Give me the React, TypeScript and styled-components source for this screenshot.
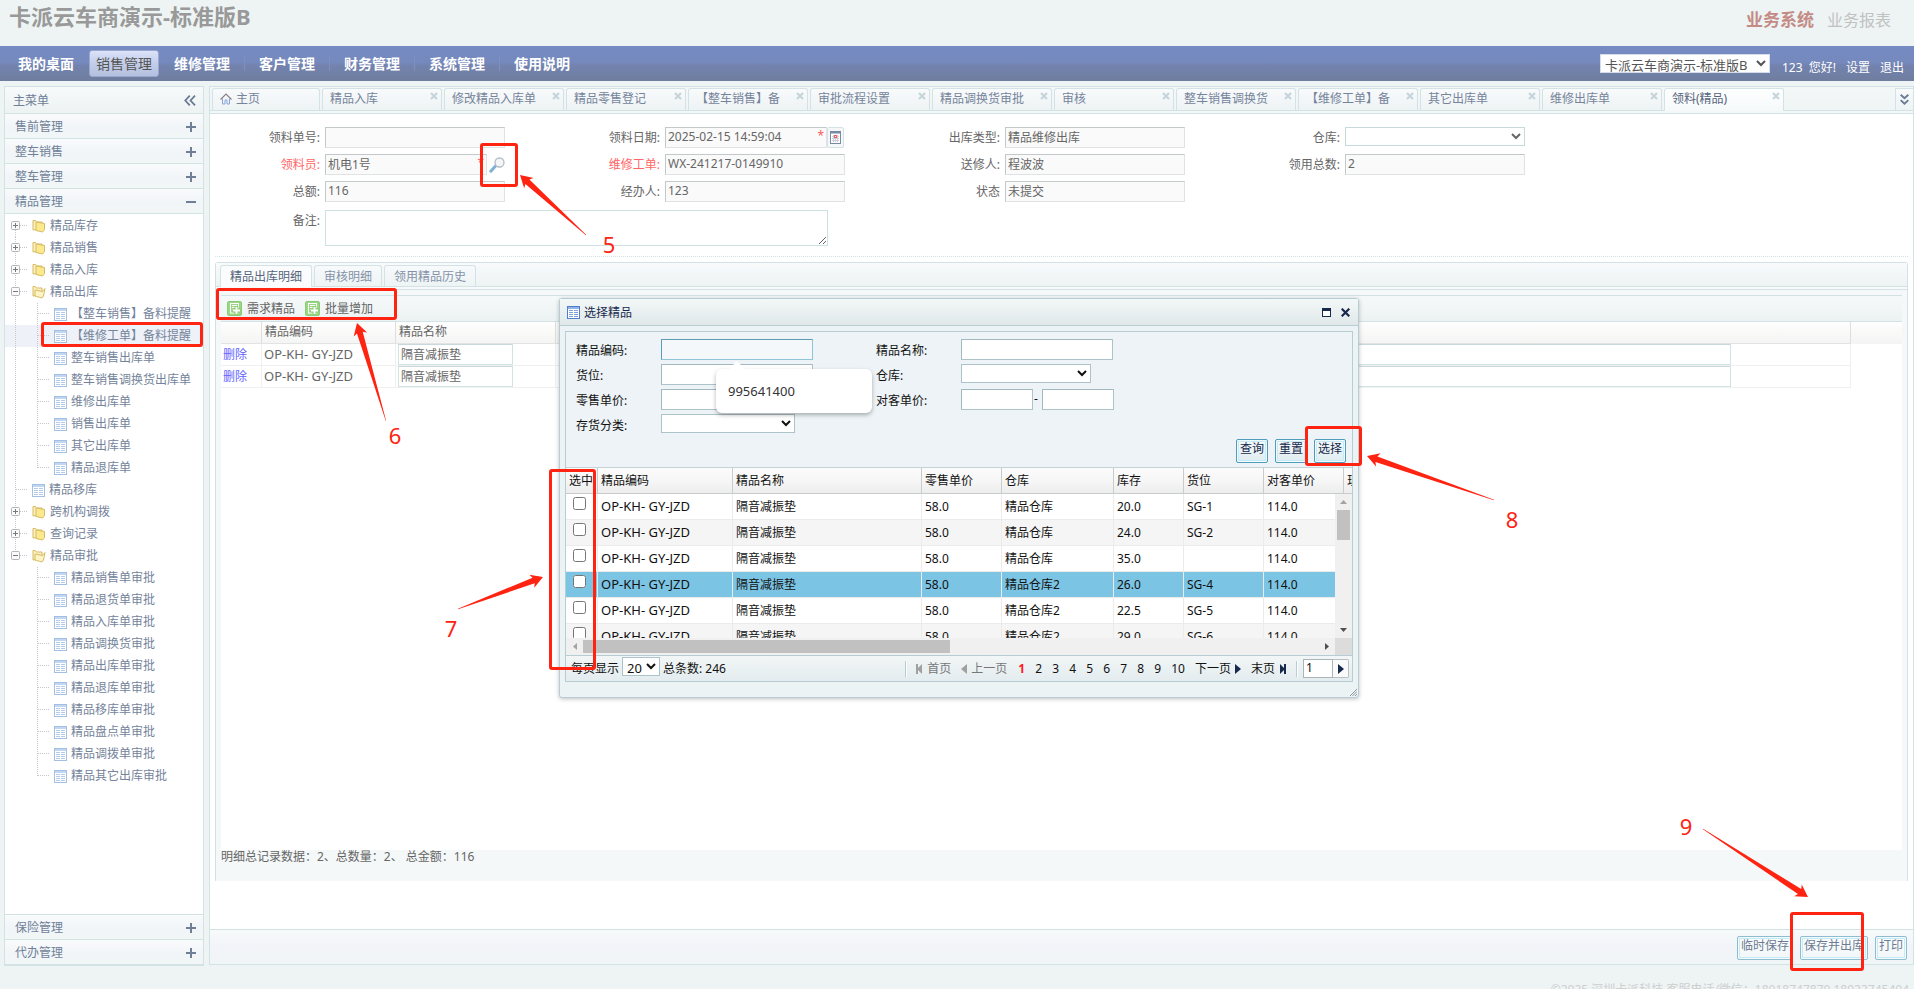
import React from "react";
import styled, { createGlobalStyle, css } from "styled-components";

const Global = createGlobalStyle`
  * { box-sizing: border-box; }
  html, body { margin: 0; padding: 0; }
  body {
    font: 12px/16px "Noto Sans", "Noto Sans CJK SC", sans-serif;
    color: #666;
    background: #eef4f4;
  }
  button, input, select, textarea { font: inherit; color: inherit; margin: 0; }
  button { cursor: pointer; }
  a { color: inherit; text-decoration: none; }
  ul { list-style: none; margin: 0; padding: 0; }
  table { border-collapse: separate; border-spacing: 0; }
`;

const line = "#d3e3e5";
const mark = "#ff2312";

/* ---------- page frame ---------- */

const Page = styled.div`
  position: relative;
  height: 100vh;
  display: flex;
  flex-direction: column;
  overflow: hidden;
`;

const Header = styled.header`
  height: 46px;
  flex: none;
  display: flex;
  justify-content: space-between;
  padding: 0 23px 0 9px;
`;

const SiteTitle = styled.h1`
  margin: 0;
  font-size: 22px;
  line-height: 32px;
  font-weight: 700;
  color: #999;
`;

const SystemLinks = styled.nav`
  display: flex;
  gap: 13px;
  font-size: 16px;
  line-height: 40px;
`;

const SystemLink = styled.a<{ $active?: boolean }>`
  font-size: ${(p) => (p.$active ? 17 : 16)}px;
  font-weight: ${(p) => (p.$active ? 700 : 400)};
  color: ${(p) => (p.$active ? "#c48b86" : "#c0c2c2")};
`;

const NavBar = styled.nav`
  height: 35px;
  flex: none;
  display: flex;
  justify-content: space-between;
  padding: 4px 10px 4px 4px;
  background: linear-gradient(#758bc2 0%, #7589bd 48%, #7383af 55%, #6f7d9e 100%);
`;

const NavItems = styled.div`
  display: flex;
  align-items: center;
`;

const NavItem = styled.a<{ $active?: boolean; $line?: boolean }>`
  height: 27px;
  font-size: 14px;
  line-height: 27px;
  color: #fff;
  font-weight: 700;
  padding: 0 14px;
  position: relative;
  border-right: 1px solid transparent;
  ${(p) =>
    p.$line &&
    css`
      border-image: linear-gradient(transparent 25%, #7f90bd 25%, #7f90bd 75%, transparent 75%) 1;
      border-width: 0 1px 0 0;
    `}
  ${(p) =>
    p.$active &&
    css`
      padding: 0 6px;
      margin-right: 1px;
      line-height: 25px;
      font-weight: 400;
      color: #555;
      border: 1px solid #9aa8cf;
      border-radius: 3px;
      background: linear-gradient(#dbe3fa, #c3cde8 50%, #b4c0df);
    `}
`;

const UserArea = styled.div`
  display: flex;
  color: #fff;
  line-height: 35px;
`;

const CompanySelect = styled.select`
  width: 170px;
  height: 19px;
  margin: 4px 12px 0 0;
  padding: 0;
  font-size: 13px;
  color: #555;
  background: #fff;
  border: 1px solid #d5dcea;
  border-radius: 0;
`;

const UserText = styled.span`
  margin-right: 10px;
  white-space: pre;
`;

const UserLink = styled.a`
  & + & {
    margin-left: 10px;
  }
`;

const Body = styled.div`
  flex: 1;
  min-height: 0;
  display: flex;
  gap: 5px;
  padding: 5px 0 0 4px;
`;

const Footer = styled.footer`
  height: 23px;
  flex: none;
  overflow: hidden;
  padding: 16px 5px 0 0;
  text-align: right;
  color: #cdcfcf;
`;

/* ---------- sidebar ---------- */

const Sidebar = styled.aside`
  width: 200px;
  flex: none;
  display: flex;
  flex-direction: column;
  border: 1px solid ${line};
  border-bottom-width: 2px;
  background: #fff;
  color: #6f7f97;
`;

const SideTitle = styled.div`
  height: 26px;
  flex: none;
  display: flex;
  align-items: center;
  justify-content: space-between;
  padding: 1px 7px 0 8px;
  background: linear-gradient(#f7fafb, #edf2f2);
`;

const SideSection = styled.button`
  height: 25px;
  flex: none;
  width: 100%;
  display: flex;
  align-items: center;
  justify-content: space-between;
  padding: 1px 7px 0 10px;
  border: 0;
  border-top: 1px solid ${line};
  background: linear-gradient(#f9fafc, #f1f5f8 60%, #f1f6f6);
`;

const Tree = styled.ul`
  flex: 1;
  padding-top: 1px;
  border-top: 1px solid ${line};
  overflow: hidden;
`;

const TreeRow = styled.li<{ $selected?: boolean }>`
  height: 22px;
  display: flex;
  align-items: center;
  background: ${(p) => (p.$selected ? "#eef2f8" : "transparent")};
  color: #75849b;
`;

const TreeLabel = styled.a`
  margin-left: 4px;
  white-space: nowrap;
`;

/* ---------- main panel ---------- */

const Main = styled.main`
  flex: 1;
  min-width: 0;
  display: flex;
  flex-direction: column;
  margin-bottom: 1px;
  border: 1px solid ${line};
  background: #fff;
`;

const TabStrip = styled.div`
  height: 27px;
  flex: none;
  display: flex;
  padding: 1px 0 0 2px;
  gap: 2px;
  border-bottom: 1px solid ${line};
  background: linear-gradient(#f3f7f8 0, #eff4f5 23px, ${line} 23px, ${line} 24px, #f4f7f8 24px);
`;

const Tab = styled.a<{ $active?: boolean; $home?: boolean }>`
  flex: 0 1 ${(p) => (p.$home ? 108 : 120)}px;
  min-width: 0;
  height: ${(p) => (p.$active ? 23 : 22)}px;
  display: flex;
  align-items: flex-start;
  justify-content: space-between;
  padding: 0 3px 0 7px;
  line-height: 20px;
  border: 1px solid ${line};
  border-bottom: 0;
  border-radius: 3px 3px 0 0;
  white-space: nowrap;
  color: ${(p) => (p.$active ? "#56647c" : "#75849b")};
  background: ${(p) => (p.$active ? "linear-gradient(#fdfefe, #f6f9fb)" : "linear-gradient(#f8fafc, #eef3f4)")};
`;

const HomeLabel = styled.span`
  display: flex;
  align-items: center;
  gap: 4px;
`;

const TabClose = styled.button`
  width: 8px;
  height: 8px;
  margin-top: 3px;
  padding: 0;
  border: 0;
  background: none;
  display: flex;
`;

const TabMore = styled.button`
  width: 18px;
  height: 22px;
  margin-left: auto;
  display: flex;
  align-items: center;
  justify-content: center;
  padding: 0;
  border: 1px solid ${line};
  border-width: 1px 0 0 1px;
  background: linear-gradient(#f8fafc, #eef3f4);
`;

const Form = styled.form`
  display: grid;
  grid-template-columns: repeat(4, 340px);
  grid-auto-rows: 27px;
  flex: none;
  height: 143px;
  padding-top: 13px;
  margin: 0 5px;
  border-bottom: 1px dotted ${line};
`;

const Field = styled.div<{ $wide?: boolean }>`
  display: flex;
  align-items: flex-start;
  grid-column: ${(p) => (p.$wide ? "span 2" : "auto")};
  margin-left: -5px;
`;

const FieldLabel = styled.label<{ $required?: boolean }>`
  width: 110px;
  margin-right: 5px;
  flex: none;
  text-align: right;
  line-height: 21px;
  color: ${(p) => (p.$required ? "#ff6666" : "#666")};
`;

const Control = styled.span<{ $w: number }>`
  position: relative;
  width: ${(p) => p.$w}px;
  height: 21px;
`;

const ReadInput = styled.input`
  display: block;
  width: 100%;
  height: 21px;
  padding: 0 2px 2px;
  border: 1px solid #c3c9cb;
  border-right-color: #dfe3e4;
  border-bottom-color: #dfe3e4;
  background: #fafafa;
`;

const Star = styled.span`
  position: absolute;
  right: 3px;
  top: 2px;
  line-height: 14px;
  color: #ff5a5a;
`;

const IconButton = styled.button<{ $framed?: boolean }>`
  width: ${(p) => (p.$framed ? 17 : 20)}px;
  height: 21px;
  display: flex;
  align-items: center;
  justify-content: center;
  padding: 0;
  background: ${(p) => (p.$framed ? "#f5f8f9" : "none")};
  border: ${(p) => (p.$framed ? `1px solid ${line}` : "0")};
  border-radius: 2px;
`;

const FormSelect = styled.select`
  width: 180px;
  height: 19px;
  padding: 0;
  border: 1px solid #c9d8dc;
  border-radius: 0;
  background: #fff;
`;

const Remark = styled.textarea`
  width: 503px;
  height: 36px;
  margin-top: 2px;
  padding: 2px;
  border: 1px solid #cfe0e3;
  background: #fff;
`;

const RemarkLabel = styled(FieldLabel)`
  margin-top: 2px;
`;

const Detail = styled.section`
  margin: 5px 5px 0;
  flex: 1;
  min-height: 0;
  display: flex;
  flex-direction: column;
  border: 1px solid ${line};
  border-bottom: 0;
  border-radius: 3px 3px 0 0;
  background: #f4f8f8;
`;

const DetailTabs = styled.div`
  height: 27px;
  flex: none;
  display: flex;
  gap: 2px;
  padding: 2px 4px 0;
  border-bottom: 1px solid ${line};
  background: linear-gradient(#f8fafc 0, #eef3f4 23px, ${line} 23px, ${line} 24px, #f8fafa 24px);
`;

const DetailTab = styled.a<{ $active?: boolean }>`
  height: ${(p) => (p.$active ? 22 : 21)}px;
  padding: 0 9px;
  line-height: 21px;
  border: 1px solid ${line};
  border-bottom: 0;
  border-radius: 3px 3px 0 0;
  color: ${(p) => (p.$active ? "#56647c" : "#8492a8")};
  background: ${(p) => (p.$active ? "#fafcfd" : "linear-gradient(#f8fafc, #eef3f4)")};
`;

const DetailBody = styled.div`
  flex: 1;
  min-height: 0;
  margin: 5px 5px 0;
  display: flex;
  flex-direction: column;
`;

const Toolbar = styled.div`
  height: 27px;
  flex: none;
  display: flex;
  align-items: center;
  gap: 10px;
  padding-left: 6px;
  border-top: 1px solid ${line};
  border-bottom: 1px solid ${line};
  background: linear-gradient(#f6f9f9, #ecf2f3);
`;

const ToolButton = styled.button`
  display: flex;
  align-items: center;
  gap: 5px;
  padding: 0;
  border: 0;
  background: none;
`;

const DetailGrid = styled.div`
  flex: 1;
  background: #fff;
  overflow: hidden;
`;

const DetailHead = styled.div`
  background: linear-gradient(#fefefe, #f9f9f8 50%, #f4f4f4);
`;

const DetailTable = styled.table`
  table-layout: fixed;
  width: 1630px;

  th {
    height: 22px;
    padding: 0 3px 2px;
    text-align: left;
    font-weight: 400;
    border-right: 1px solid #dcdfe0;
    border-bottom: 1px solid #e2e4e4;
  }
  td {
    height: 22px;
    padding: 0 2px;
    background: #fff;
    border-right: 1px solid #f0f0f0;
    border-bottom: 1px solid #f0f0f0;
  }
`;

const DeleteLink = styled.a`
  color: #6363ff;
`;

const Code = styled.span`
  font-size: 13px;
  line-height: 16px;
`;

const CellInput = styled.input<{ $w: number }>`
  display: block;
  width: ${(p) => p.$w}px;
  height: 21px;
  padding: 0 2px 2px;
  border: 1px solid ${line};
  border-top-color: #c9d8dc;
  background: #fff;
`;

const Summary = styled.div`
  height: 31px;
  flex: none;
  line-height: 14px;
  white-space: pre;
`;

const ActionBar = styled.div`
  height: 35px;
  flex: none;
  margin-top: 48px;
  display: flex;
  justify-content: flex-end;
  gap: 7px;
  padding: 6px 6px 0;
  border-top: 1px solid ${line};
  background: linear-gradient(#f7fafb, #f2f4f8 50%, #f0f5f7);
`;

const PushButton = styled.button<{ $faded?: boolean }>`
  height: 24px;
  padding: 0 3px 5px;
  flex: none;
  line-height: 18px;
  border: 1px solid ${(p) => (p.$faded ? "#8fbdd0" : "#4f9cbc")};
  border-radius: 2px;
  box-shadow: inset 0 0 0 1px #f4fbfd, inset 0 0 0 2px #c4ecf8;
  background: ${(p) => (p.$faded ? "linear-gradient(#fbfdfd, #f2f6f8)" : "linear-gradient(#f6fbfc, #dfecf0)")};
  color: ${(p) => (p.$faded ? "#6d7c94" : "#17294d")};
`;

/* ---------- dialog ---------- */

const Dialog = styled.section`
  position: absolute;
  left: 559px;
  top: 298px;
  width: 800px;
  height: 400px;
  display: flex;
  flex-direction: column;
  border: 1px solid #b7cdd3;
  border-radius: 3px;
  background: #ecf3f5;
  box-shadow: 0 1px 4px rgba(0, 0, 0, 0.25);
  color: #111;
`;

const DialogTitle = styled.div`
  height: 27px;
  flex: none;
  display: flex;
  align-items: center;
  gap: 4px;
  padding: 1px 8px 0 7px;
  border-bottom: 1px solid #b7cdd3;
  background: linear-gradient(#f3f7f7 0%, #eaf0f1 50%, #e0e8ea 100%);
  color: #17294d;
`;

const DialogTools = styled.span`
  margin-left: auto;
  display: flex;
  gap: 10px;
`;

const BareButton = styled.button`
  display: flex;
  align-items: center;
  padding: 0;
  border: 0;
  background: none;
`;

const DialogBody = styled.div`
  height: 351px;
  margin: 5px 5px 0;
  display: flex;
  flex-direction: column;
  border: 1px solid #b7cdd3;
  background: #edf3f6;
`;

const SearchForm = styled.form`
  height: 135px;
  flex: none;
  display: grid;
  grid-template-columns: 300px 1fr;
  grid-auto-rows: 25px;
  padding: 7px 6px 0 10px;
`;

const SearchField = styled.div`
  display: flex;
`;

const SearchLabel = styled.label`
  width: 85px;
  line-height: 23px;
`;

const SearchInput = styled.input<{ $w: number; $focused?: boolean }>`
  width: ${(p) => p.$w}px;
  height: 21px;
  border: 1px solid ${(p) => (p.$focused ? "#8ec6d8" : "#adc3ca")};
  border-top-color: ${(p) => (p.$focused ? "#5c9db3" : "#a3b9c0")};
  border-left-color: ${(p) => (p.$focused ? "#5c9db3" : "#a3b9c0")};
  background: ${(p) => (p.$focused ? "#f5f8fb" : "#fff")};
  outline: none;
`;

const SearchSelect = styled.select<{ $w: number }>`
  width: ${(p) => p.$w}px;
  height: 19px;
  padding: 0;
  border: 1px solid #adc3ca;
  border-radius: 0;
  background: #fff;
`;

const Dash = styled.span`
  width: 9px;
  padding-left: 1px;
  line-height: 20px;
`;

const SearchActions = styled.div`
  grid-column: span 2;
  display: flex;
  justify-content: flex-end;
  gap: 7px;
`;

const HeadClip = styled.div`
  flex: none;
  overflow: hidden;
  border-top: 1px solid #c6d4d8;
  background: linear-gradient(#fbfbfb, #f6f6f6 50%, #ececec);
`;

const BodyArea = styled.div`
  height: 161px;
  flex: none;
  display: grid;
  grid-template-columns: 1fr 17px;
  grid-template-rows: 1fr 17px;
  background: #dcdcdc;
`;

const BodyClip = styled.div`
  min-width: 0;
  min-height: 0;
  overflow: hidden;
  background: #fff;
`;

const PickTable = styled.table`
  table-layout: fixed;
  width: 877px;

  th,
  td {
    padding: 0 3px;
    height: 26px;
    text-align: left;
    font-weight: 400;
    white-space: nowrap;
  }
  th {
    border-right: 1px solid #c8cccd;
    border-bottom: 1px solid #c8cccd;
    line-height: 24px;
  }
  td {
    border-right: 1px solid #ebebeb;
    border-bottom: 1px solid #ebebeb;
  }
  th:first-child {
    padding-right: 0;
  }
  td:first-child {
    padding: 0 0 0 7px;
  }
`;

const PickRow = styled.tr<{ $alt?: boolean; $selected?: boolean }>`
  background: ${(p) => (p.$selected ? "#7cc4e4" : p.$alt ? "#f5f5f5" : "#fff")};
`;

const PickBox = styled.input`
  display: block;
  width: 13px;
  height: 13px;
  margin-bottom: 6px;
`;

const VScroll = styled.div`
  display: flex;
  flex-direction: column;
  align-items: center;
  padding: 6px 0;
  background: #f0f0f0;
`;

const VThumb = styled.div`
  width: 13px;
  height: 30px;
  margin: 6px 0 auto;
  background: #c1c1c1;
`;

const HScroll = styled.div`
  display: flex;
  align-items: center;
  padding: 0 6px 0 7px;
  background: #f0f0f0;
`;

const HThumb = styled.div`
  width: 367px;
  height: 13px;
  margin: 0 auto 0 6px;
  background: #c1c1c1;
`;

const Pager = styled.div`
  flex: 1;
  display: flex;
  align-items: center;
  padding: 0 3px 0 5px;
  border-top: 1px solid #b7cdd3;
  background: linear-gradient(#f2f6f7, #e3ecef);
`;

const SizeSelect = styled.select`
  width: 38px;
  height: 19px;
  margin: 0 3px 4px;
  padding: 0;
  font-size: 13px;
  border: 1px solid #adc3ca;
  border-radius: 0;
  background: #fff;
`;

const PagerLinks = styled.div`
  margin-left: auto;
  display: flex;
  align-items: center;
`;

const Divider = styled.i`
  width: 1px;
  height: 16px;
  background: #b7cdd3;
  box-shadow: 1px 0 0 #fff;
`;

const PagerStep = styled.button<{ $off?: boolean }>`
  display: flex;
  align-items: center;
  gap: 4px;
  padding: 0;
  border: 0;
  background: none;
  color: ${(p) => (p.$off ? "#777" : "#111")};
  margin-left: 10px;
`;

const PageNumbers = styled.div`
  display: flex;
  gap: 10px;
  margin-left: 11px;
`;

const PageNumber = styled.a<{ $current?: boolean }>`
  min-width: 7px;
  color: ${(p) => (p.$current ? "#ff1a1a" : "#111")};
  font-weight: ${(p) => (p.$current ? 700 : 400)};
`;

const GoBox = styled.span`
  display: flex;
  margin-left: 6px;
`;

const GoInput = styled.input`
  width: 30px;
  height: 19px;
  padding: 0 2px 2px;
  border: 1px solid #a9b5b9;
  background: #fff;
`;

const GoButton = styled.button`
  width: 16px;
  height: 19px;
  padding: 0;
  display: flex;
  align-items: center;
  justify-content: center;
  border: 1px solid #b9bfc2;
  border-left: 0;
  border-radius: 0 2px 2px 0;
  background: #fafafa;
`;

const ResizeGrip = styled.svg`
  position: absolute;
  right: 1px;
  bottom: 1px;
`;

const Suggestion = styled.div`
  position: absolute;
  left: 716px;
  top: 369px;
  width: 156px;
  height: 44px;
  padding-left: 12px;
  border-radius: 6px;
  background: #fff;
  box-shadow: 0 2px 4px rgba(0, 0, 0, 0.3);
  font-size: 13px;
  line-height: 44px;
  color: #333;

  &::before {
    content: "";
    position: absolute;
    left: 13px;
    top: -8px;
    border: 8px solid transparent;
    border-top: 0;
    border-bottom-color: #fff;
  }
`;

/* ---------- step marks ---------- */

const MarkBox = styled.div<{ $x: number; $y: number; $w: number; $h: number }>`
  position: absolute;
  left: ${(p) => p.$x}px;
  top: ${(p) => p.$y}px;
  width: ${(p) => p.$w}px;
  height: ${(p) => p.$h}px;
  border: 3px solid ${mark};
  border-radius: 3px;
  pointer-events: none;
`;

const MarkNumber = styled.span<{ $x: number; $y: number }>`
  position: absolute;
  left: ${(p) => p.$x}px;
  top: ${(p) => p.$y}px;
  transform: translate(-50%, -50%);
  font-size: 22px;
  line-height: 24px;
  color: ${mark};
`;

const ArrowLayer = styled.svg`
  position: absolute;
  left: 0;
  top: 0;
  width: 100%;
  height: 100%;
  pointer-events: none;
`;

type ArrowProps = { from: [number, number]; to: [number, number] };

function Arrow({ from, to }: ArrowProps) {
  const dx = to[0] - from[0];
  const dy = to[1] - from[1];
  const len = Math.hypot(dx, dy);
  const ux = dx / len;
  const uy = dy / len;
  const at = (back: number, side: number) =>
    `${(to[0] - ux * back - uy * side).toFixed(2)},${(to[1] - uy * back + ux * side).toFixed(2)}`;
  const points = [
    at(0, 0),
    at(12, 7),
    at(10, 3),
    at(len, 0.2),
    at(len, -0.2),
    at(10, -3),
    at(12, -7),
  ].join(" ");
  return <polygon points={points} fill={mark} />;
}

/* ---------- icons ---------- */

const PlusIcon = () => (
  <svg width="10" height="10" viewBox="0 0 10 10">
    <path d="M5 0v10M0 5h10" stroke="#6f7f97" strokeWidth="2" />
  </svg>
);

const MinusIcon = () => (
  <svg width="10" height="10" viewBox="0 0 10 10">
    <path d="M0 5h10" stroke="#6f7f97" strokeWidth="2" />
  </svg>
);

const CollapseIcon = () => (
  <svg width="12" height="11" viewBox="0 0 12 11" fill="none" stroke="#6a7b95" strokeWidth="1.8">
    <path d="M5.8 0.6L1.3 5.5l4.5 4.9M11 0.6L6.5 5.5l4.5 4.9" />
  </svg>
);

const ExpandIcon = () => (
  <svg width="9" height="11" viewBox="0 0 9 11" fill="none" stroke="#6a7b95" strokeWidth="1.9">
    <path d="M0.7 0.8L4.5 4.3l3.8-3.5M0.7 6.1L4.5 9.6l3.8-3.5" />
  </svg>
);

const CloseIcon = () => (
  <svg width="8" height="8" viewBox="0 0 8 8">
    <path d="M1 1l6 6M7 1L1 7" stroke="#c5d5db" strokeWidth="2.2" />
  </svg>
);

const HomeIcon = () => (
  <svg width="12" height="12" viewBox="0 0 12 12" fill="none">
    <path d="M2.500 5.500v5.500h2.500v-4h2v4h2.500v-5.500" stroke="#8aa5d6" fill="#eef4fd" />
    <path d="M0.500 6.500L6 1l5.500 5.500" stroke="#8e8186" strokeWidth="1.2" />
  </svg>
);

const FolderIcon = ({ open }: { open?: boolean }) => (
  <svg width="14" height="14" viewBox="0 0 14 14" strokeLinejoin="round">
    <path d="M1 1.500h2.500l1 1.500H10v7L1 11z" fill="#fbf0bf" stroke="#d6bb62" />
    {open ? (
      <path d="M3 5l7.500 1.500L13 3.500l-1.500 7.500-1.500 2L3 11z" fill="#fdf4c4" stroke="#d6bb62" />
    ) : (
      <path d="M4 3l8.500 1.500v6l-2 2.500L4 11.500z" fill="#fce98e" stroke="#d6bb62" />
    )}
  </svg>
);

const SheetIcon = ({ dark }: { dark?: boolean }) => (
  <svg width="13" height="13" viewBox="0 0 13 13">
    <rect x="0.5" y="0.5" width="12" height="12" fill="#fff" stroke={dark ? "#4f7fc8" : "#a3bfe2"} />
    <rect x="1" y="1" width="11" height="2" fill={dark ? "#8fb4ea" : "#c0d6f1"} />
    <path
      d="M2 4.500h4M7 4.500h4M2 6.500h4M7 6.500h4M2 8.500h4M7 8.500h4M2 10.500h4M7 10.500h4"
      stroke={dark ? "#7ea2d8" : "#b4cae8"}
    />
  </svg>
);

const SearchIcon = () => (
  <svg width="16" height="16" viewBox="0 0 16 16">
    <path d="M1.800 14.200l5-5.400" stroke="#7db2d6" strokeWidth="3" strokeLinecap="round" />
    <circle cx="10.5" cy="5.5" r="4.5" fill="#f4f6f8" stroke="#b5bcc4" strokeWidth="1.3" />
  </svg>
);

const CalendarIcon = () => (
  <svg width="11" height="13" viewBox="0 0 11 13">
    <rect x="0.5" y="0.5" width="10" height="12" fill="#fff" stroke="#7b89a3" />
    <path d="M0 1.500h11" stroke="#7b89a3" strokeWidth="2" />
    <path d="M2 5.500h7M2 7.500h7M2 9.500h7M3.500 4v7M5.500 4v7M7.500 4v7" stroke="#c9d0dc" />
    <rect x="4.5" y="4.5" width="2" height="2" fill="#fff" stroke="#ff5a5a" />
  </svg>
);

const AddIcon = () => (
  <svg width="15" height="15" viewBox="0 0 15 15">
    <rect x="0.5" y="0.5" width="14" height="14" rx="1.5" fill="#9bd685" stroke="#8acb76" />
    <path d="M3 2h9v10.500H3z" fill="#fff" />
    <path d="M4 3h7v8.500H4z" fill="#9bd685" />
    <path d="M5 4.500h5M5 6.500h3M5 8.500h2" stroke="#fff" />
    <path d="M9.500 5.500v8M5.500 9.500h8" stroke="#85c96f" strokeWidth="4" />
    <path d="M9.500 6v7M6 9.500h7" stroke="#fff" strokeWidth="2" />
  </svg>
);

const treeLine = { stroke: "#c4c8cc", strokeDasharray: "1 1", fill: "none" };

const TreeBranch = ({ node }: { node: TreeNode }) => {
  if (node.kind === "child" || node.kind === "lastChild") {
    return (
      <svg width="49" height="22" viewBox="0 0 49 22">
        {node.rail && <path d="M10.500 0v22" {...treeLine} />}
        <path d={node.kind === "child" ? "M32.500 0v22M33 10.500h11" : "M32.500 0v11M33 10.500h11"} {...treeLine} />
      </svg>
    );
  }
  const last = node.kind === "last";
  return (
    <svg width="27" height="22" viewBox="0 0 27 22">
      <path d={`M10.500 ${node.first ? 11 : 0}V${last ? 11 : 22}M11 10.500h11`} {...treeLine} />
      {!node.sheet && (
        <>
          <rect x="6.5" y="6.5" width="8" height="8" rx="1" fill="#fafafa" stroke="#b2b5b8" />
          <path d={node.open ? "M8 10.500h5" : "M8 10.500h5M10.500 8v5"} stroke="#75787c" />
        </>
      )}
    </svg>
  );
};

const Triangle = ({ d, w = 6, h = 8, color }: { d: string; w?: number; h?: number; color: string }) => (
  <svg width={w} height={h} viewBox={`0 0 ${w} ${h}`}>
    <path d={d} fill={color} />
  </svg>
);

/* ---------- data ---------- */

type TreeNode = {
  label: string;
  kind: "top" | "last" | "child" | "lastChild";
  first?: boolean;
  open?: boolean;
  sheet?: boolean;
  rail?: boolean;
  selected?: boolean;
};

const children = (labels: string[], rail: boolean): TreeNode[] =>
  labels.map((label, i) => ({
    label,
    kind: i === labels.length - 1 ? "lastChild" : "child",
    rail,
    sheet: true,
    selected: label === "【维修工单】备料提醒",
  }));

const tree: TreeNode[] = [
  { label: "精品库存", kind: "top", first: true },
  { label: "精品销售", kind: "top" },
  { label: "精品入库", kind: "top" },
  { label: "精品出库", kind: "top", open: true },
  ...children(
    [
      "【整车销售】备料提醒",
      "【维修工单】备料提醒",
      "整车销售出库单",
      "整车销售调换货出库单",
      "维修出库单",
      "销售出库单",
      "其它出库单",
      "精品退库单",
    ],
    true
  ),
  { label: "精品移库", kind: "top", sheet: true },
  { label: "跨机构调拨", kind: "top" },
  { label: "查询记录", kind: "top" },
  { label: "精品审批", kind: "last", open: true },
  ...children(
    [
      "精品销售单审批",
      "精品退货单审批",
      "精品入库单审批",
      "精品调换货审批",
      "精品出库单审批",
      "精品退库单审批",
      "精品移库单审批",
      "精品盘点单审批",
      "精品调拨单审批",
      "精品其它出库审批",
    ],
    false
  ),
];

const navItems = ["我的桌面", "销售管理", "维修管理", "客户管理", "财务管理", "系统管理", "使用说明"];

const tabs = [
  "精品入库",
  "修改精品入库单",
  "精品零售登记",
  "【整车销售】备",
  "审批流程设置",
  "精品调换货审批",
  "审核",
  "整车销售调换货",
  "【维修工单】备",
  "其它出库单",
  "维修出库单",
  "领料(精品)",
];

const pickRows = [
  ["58.0", "精品仓库", "20.0", "SG-1"],
  ["58.0", "精品仓库", "24.0", "SG-2"],
  ["58.0", "精品仓库", "35.0", ""],
  ["58.0", "精品仓库2", "26.0", "SG-4"],
  ["58.0", "精品仓库2", "22.5", "SG-5"],
  ["58.0", "精品仓库2", "29.0", "SG-6"],
];

const pickHeads = ["选中", "精品编码", "精品名称", "零售单价", "仓库", "库存", "货位", "对客单价", "现价"];
const pickWidths = [32, 135, 189, 80, 112, 70, 80, 80, 99];

const PickCols = () => (
  <colgroup>
    {pickWidths.map((w, i) => (
      <col key={i} width={w} />
    ))}
  </colgroup>
);

const DetailCols = () => (
  <colgroup>
    <col width="41" />
    <col width="134" />
    <col width="160" />
    <col width="570" />
    <col />
  </colgroup>
);

type TextFieldProps = {
  id: string;
  label: string;
  value?: string;
  width?: number;
  required?: boolean;
  star?: boolean;
  after?: React.ReactNode;
};

const TextField = ({ id, label, value = "", width = 180, required, star, after }: TextFieldProps) => (
  <Field>
    <FieldLabel htmlFor={id} $required={required}>
      {label}
    </FieldLabel>
    <Control $w={width}>
      <ReadInput id={id} readOnly value={value} />
      {star && <Star>*</Star>}
    </Control>
    {after}
  </Field>
);

/* ---------- sections ---------- */

const SideMenu = () => (
  <Sidebar>
    <SideTitle>
      主菜单
      <BareButton aria-label="收起">
        <CollapseIcon />
      </BareButton>
    </SideTitle>
    {["售前管理", "整车销售", "整车管理", "精品管理"].map((name) => (
      <SideSection key={name}>
        {name}
        {name === "精品管理" ? <MinusIcon /> : <PlusIcon />}
      </SideSection>
    ))}
    <Tree>
      {tree.map((node) => (
        <TreeRow key={node.label} $selected={node.selected}>
          <TreeBranch node={node} />
          {node.sheet ? <SheetIcon /> : <FolderIcon open={node.open} />}
          <TreeLabel href="#">{node.label}</TreeLabel>
        </TreeRow>
      ))}
    </Tree>
    {["保险管理", "代办管理"].map((name) => (
      <SideSection key={name}>
        {name}
        <PlusIcon />
      </SideSection>
    ))}
  </Sidebar>
);

const PageTabs = () => (
  <TabStrip>
    <Tab href="#" $home>
      <HomeLabel>
        <HomeIcon />
        主页
      </HomeLabel>
    </Tab>
    {tabs.map((t, i) => (
      <Tab as="div" key={t} $active={i === tabs.length - 1}>
        <a href="#">{t}</a>
        <TabClose aria-label="关闭">
          <CloseIcon />
        </TabClose>
      </Tab>
    ))}
    <TabMore aria-label="更多">
      <ExpandIcon />
    </TabMore>
  </TabStrip>
);

const PickForm = () => (
  <Form>
    <TextField id="no" label="领料单号:" />
    <TextField
      id="date"
      label="领料日期:"
      value="2025-02-15 14:59:04"
      width={162}
      star
      after={
        <IconButton type="button" $framed aria-label="日期">
          <CalendarIcon />
        </IconButton>
      }
    />
    <TextField id="type" label="出库类型:" value="精品维修出库" />
    <Field>
      <FieldLabel htmlFor="store">仓库:</FieldLabel>
      <FormSelect id="store" />
    </Field>
    <TextField
      id="picker"
      label="领料员:"
      value="机电1号"
      width={162}
      required
      star
      after={
        <IconButton type="button" aria-label="查找">
          <SearchIcon />
        </IconButton>
      }
    />
    <TextField id="order" label="维修工单:" value="WX-241217-0149910" required />
    <TextField id="sender" label="送修人:" value="程波波" />
    <TextField id="count" label="领用总数:" value="2" />
    <TextField id="total" label="总额:" value="116" />
    <TextField id="handler" label="经办人:" value="123" />
    <TextField id="state" label="状态" value="未提交" />
    <span />
    <Field $wide>
      <RemarkLabel htmlFor="remark">备注:</RemarkLabel>
      <Remark id="remark" />
    </Field>
  </Form>
);

const DetailPanel = () => (
  <Detail>
    <DetailTabs>
      <DetailTab href="#" $active>
        精品出库明细
      </DetailTab>
      <DetailTab href="#">审核明细</DetailTab>
      <DetailTab href="#">领用精品历史</DetailTab>
    </DetailTabs>
    <DetailBody>
      <Toolbar>
        <ToolButton>
          <AddIcon />
          需求精品
        </ToolButton>
        <ToolButton>
          <AddIcon />
          批量增加
        </ToolButton>
      </Toolbar>
      <DetailGrid>
        <DetailHead>
          <DetailTable>
            <DetailCols />
            <thead>
              <tr>
                <th />
                <th>精品编码</th>
                <th>精品名称</th>
                <th />
                <th />
              </tr>
            </thead>
          </DetailTable>
        </DetailHead>
        <DetailTable>
          <DetailCols />
          <tbody>
            {[1, 2].map((n) => (
              <tr key={n}>
                <td>
                  <DeleteLink href="#">删除</DeleteLink>
                </td>
                <td>
                  <Code>OP-KH- GY-JZD</Code>
                </td>
                <td>
                  <CellInput $w={115} defaultValue="隔音减振垫" aria-label="精品名称" />
                </td>
                <td />
                <td>
                  <CellInput $w={603} aria-label="备注" />
                </td>
              </tr>
            ))}
          </tbody>
        </DetailTable>
      </DetailGrid>
      <Summary>明细总记录数据：2、总数量：2、 总金额：116</Summary>
    </DetailBody>
  </Detail>
);

const PickDialog = () => (
  <Dialog role="dialog" aria-label="选择精品">
    <DialogTitle>
      <SheetIcon dark />
      选择精品
      <DialogTools>
        <BareButton aria-label="最大化">
          <svg width="9" height="9" viewBox="0 0 9 9">
            <rect x="0.5" y="0.5" width="8" height="8" fill="#fff" stroke="#17294d" />
            <path d="M0 1.500h9" stroke="#17294d" strokeWidth="3" />
          </svg>
        </BareButton>
        <BareButton aria-label="关闭">
          <svg width="9" height="9" viewBox="0 0 9 9">
            <path d="M0.7 0.7l7.6 7.6M8.3 0.7L0.7 8.3" stroke="#17294d" strokeWidth="2.2" />
          </svg>
        </BareButton>
      </DialogTools>
    </DialogTitle>
    <DialogBody>
      <SearchForm>
        <SearchField>
          <SearchLabel htmlFor="q-code">精品编码:</SearchLabel>
          <SearchInput id="q-code" $w={152} $focused />
        </SearchField>
        <SearchField>
          <SearchLabel htmlFor="q-name">精品名称:</SearchLabel>
          <SearchInput id="q-name" $w={152} />
        </SearchField>
        <SearchField>
          <SearchLabel htmlFor="q-place">货位:</SearchLabel>
          <SearchInput id="q-place" $w={152} />
        </SearchField>
        <SearchField>
          <SearchLabel htmlFor="q-store">仓库:</SearchLabel>
          <SearchSelect id="q-store" $w={130} />
        </SearchField>
        <SearchField>
          <SearchLabel htmlFor="q-price">零售单价:</SearchLabel>
          <SearchInput id="q-price" $w={152} />
        </SearchField>
        <SearchField>
          <SearchLabel htmlFor="q-min">对客单价:</SearchLabel>
          <SearchInput id="q-min" $w={72} />
          <Dash>-</Dash>
          <SearchInput $w={72} aria-label="对客单价上限" />
        </SearchField>
        <SearchField>
          <SearchLabel htmlFor="q-class">存货分类:</SearchLabel>
          <SearchSelect id="q-class" $w={134} />
        </SearchField>
        <span />
        <SearchActions>
          <PushButton type="button">查询</PushButton>
          <PushButton type="button">重置</PushButton>
          <PushButton type="button">选择</PushButton>
        </SearchActions>
      </SearchForm>
      <HeadClip>
        <PickTable>
          <PickCols />
          <thead>
            <tr>
              {pickHeads.map((h) => (
                <th key={h}>{h}</th>
              ))}
            </tr>
          </thead>
        </PickTable>
      </HeadClip>
      <BodyArea>
        <BodyClip>
          <PickTable>
            <PickCols />
            <tbody>
              {pickRows.map(([price, store, stock, place], i) => (
                <PickRow key={i} $alt={i % 2 === 1} $selected={i === 3}>
                  <td>
                    <PickBox type="checkbox" aria-label="选中" />
                  </td>
                  <td>
                    <Code>OP-KH- GY-JZD</Code>
                  </td>
                  <td>隔音减振垫</td>
                  <td>{price}</td>
                  <td>{store}</td>
                  <td>{stock}</td>
                  <td>{place}</td>
                  <td>114.0</td>
                  <td />
                </PickRow>
              ))}
            </tbody>
          </PickTable>
        </BodyClip>
        <VScroll>
          <Triangle w={7} h={4} d="M0 4L3.500 0 7 4z" color="#a3a3a3" />
          <VThumb />
          <Triangle w={7} h={4} d="M0 0L3.500 4 7 0z" color="#505050" />
        </VScroll>
        <HScroll>
          <Triangle w={4} h={7} d="M4 0L0 3.500 4 7z" color="#a3a3a3" />
          <HThumb />
          <Triangle w={4} h={7} d="M0 0L4 3.500 0 7z" color="#505050" />
        </HScroll>
      </BodyArea>
      <Pager>
        <label htmlFor="size">每页显示</label>
        <SizeSelect id="size">
          <option>20</option>
        </SizeSelect>
        总条数: 246
        <PagerLinks>
          <Divider />
          <PagerStep $off>
            <Triangle w={7} h={10} d="M0 0h2v4L6 0v10L2 6v4H0z" color="#a0a0a0" />
            首页
          </PagerStep>
          <PagerStep $off>
            <Triangle w={6} h={10} d="M6 0L0 5l6 5z" color="#a0a0a0" />
            上一页
          </PagerStep>
          <PageNumbers>
            {[1, 2, 3, 4, 5, 6, 7, 8, 9, 10].map((n) => (
              <PageNumber href="#" key={n} $current={n === 1}>
                {n}
              </PageNumber>
            ))}
          </PageNumbers>
          <PagerStep>
            下一页
            <Triangle w={6} h={10} d="M0 0l6 5-6 5z" color="#17294d" />
          </PagerStep>
          <PagerStep>
            末页
            <Triangle w={7} h={10} d="M7 0H5v4L1 0v10l4-4v4h2z" color="#17294d" />
          </PagerStep>
          <PagerStep as="span">
            <Divider />
          </PagerStep>
          <GoBox>
            <GoInput defaultValue="1" aria-label="页码" />
            <GoButton aria-label="跳转">
              <Triangle w={6} h={10} d="M0 0l6 5-6 5z" color="#17294d" />
            </GoButton>
          </GoBox>
        </PagerLinks>
      </Pager>
    </DialogBody>
    <ResizeGrip width="7" height="7" viewBox="0 0 7 7">
      <path d="M0 7L7 0M2.500 7L7 2.500M5 7l2-2" stroke="#8f979a" />
    </ResizeGrip>
  </Dialog>
);

export default function App() {
  return (
    <>
      <Global />
      <Page>
        <Header>
          <SiteTitle>卡派云车商演示-标准版B</SiteTitle>
          <SystemLinks>
            <SystemLink href="#" $active>
              业务系统
            </SystemLink>
            <SystemLink href="#">业务报表</SystemLink>
          </SystemLinks>
        </Header>
        <NavBar>
          <NavItems>
            {navItems.map((name, i) => (
              <NavItem key={name} href="#" $active={i === 1} $line={i > 1 && i < navItems.length - 1}>
                {name}
              </NavItem>
            ))}
          </NavItems>
          <UserArea>
            <CompanySelect aria-label="公司">
              <option>卡派云车商演示-标准版B</option>
            </CompanySelect>
            <UserText>{"123  您好!"}</UserText>
            <UserLink href="#">设置</UserLink>
            <UserLink href="#">退出</UserLink>
          </UserArea>
        </NavBar>
        <Body>
          <SideMenu />
          <Main>
            <PageTabs />
            <PickForm />
            <DetailPanel />
            <ActionBar>
              <PushButton $faded>临时保存</PushButton>
              <PushButton $faded>保存并出库</PushButton>
              <PushButton $faded>打印</PushButton>
            </ActionBar>
          </Main>
        </Body>
        <Footer>©2025 深圳卡派科技 客服电话/微信：18018747870 18023745404</Footer>

        <PickDialog />
        <Suggestion>995641400</Suggestion>

        <MarkBox $x={480} $y={143} $w={38} $h={44} />
        <MarkBox $x={41} $y={322} $w={162} $h={25} />
        <MarkBox $x={216} $y={288} $w={181} $h={32} />
        <MarkBox $x={549} $y={469} $w={47} $h={201} />
        <MarkBox $x={1305} $y={426} $w={57} $h={40} />
        <MarkBox $x={1790} $y={912} $w={74} $h={59} />
        <ArrowLayer>
          <Arrow from={[586, 235]} to={[520, 175]} />
          <Arrow from={[386, 421]} to={[357, 323]} />
          <Arrow from={[458, 609]} to={[543, 577]} />
          <Arrow from={[1494, 500]} to={[1367, 456]} />
          <Arrow from={[1703, 829]} to={[1808, 897]} />
        </ArrowLayer>
        <MarkNumber $x={609} $y={244}>5</MarkNumber>
        <MarkNumber $x={395} $y={435}>6</MarkNumber>
        <MarkNumber $x={451} $y={628}>7</MarkNumber>
        <MarkNumber $x={1512} $y={519}>8</MarkNumber>
        <MarkNumber $x={1686} $y={826}>9</MarkNumber>
      </Page>
    </>
  );
}
